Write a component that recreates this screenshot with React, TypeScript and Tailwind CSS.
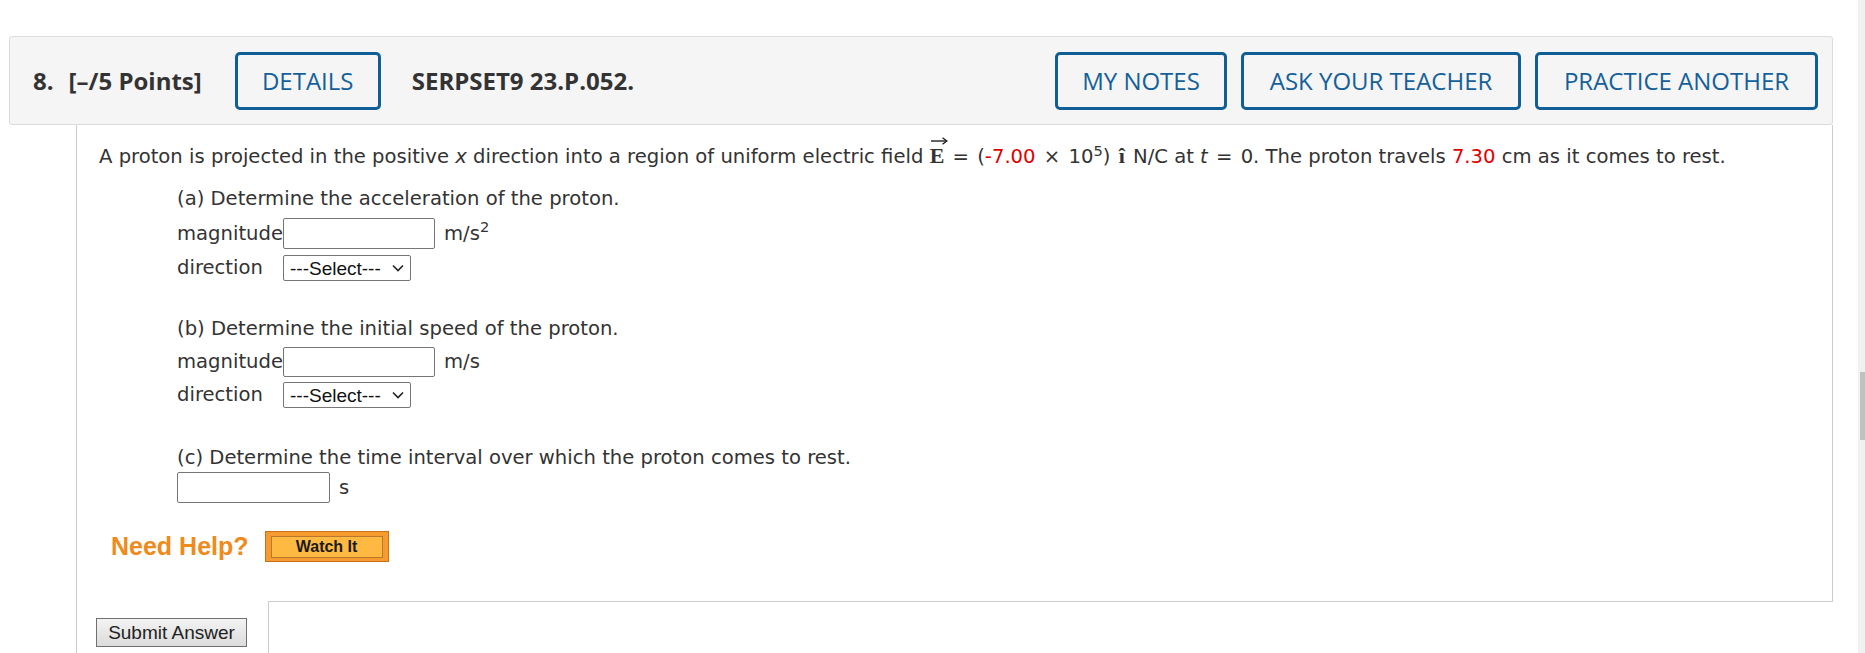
import React from 'react';

const blueBtn =
  "flex h-[58px] items-center justify-center rounded-[5px] border-[3px] border-[#0f5f96] text-[#14609a] font-medium";

const VecE = () => (
  <span className="relative inline-block font-['Liberation_Serif',serif] text-[22px] font-bold leading-none">
    E
    <svg
      className="absolute left-[1px] top-[-8px]"
      width="17"
      height="8"
      viewBox="0 0 17 8"
      fill="none"
      stroke="#222"
      strokeWidth="1.4"
    >
      <path d="M0 4 H15.5" />
      <path d="M11.5 0.8 L15.8 4 L11.5 7.2" />
    </svg>
  </span>
);

const TextBox = ({ w = 'w-[152px]', h = 'h-[31px]' }: { w?: string; h?: string }) => (
  <div className={`${w} ${h} rounded-[2px] border border-[#767676] bg-white`} />
);

const SelectBox = () => (
  <div className="flex h-[26px] w-[128px] items-center justify-between rounded-[2px] border border-[#767676] bg-white pl-[6px] pr-[6px] font-['Liberation_Sans',Arial,sans-serif] text-[19px] leading-none text-[#111]">
    <span>---Select---</span>
    <svg width="12" height="8" viewBox="0 0 12 8" fill="none" stroke="#222" strokeWidth="1.6">
      <path d="M1 1.5 L6 6.5 L11 1.5" />
    </svg>
  </div>
);

const Header = () => (
  <div className="mt-[36px] flex h-[89px] items-center rounded-[3px] border border-[#dcdcdc] bg-[#f5f5f5] pl-[23px] pr-[14px] font-['Open_Sans',sans-serif] text-[24px] text-[#333]">
    <span className="font-bold">8.</span>
    <span className="ml-[15px] font-bold">[–/5 Points]</span>
    <div className={`${blueBtn} ml-[33px] w-[146px]`}>DETAILS</div>
    <span className="ml-[31px] font-bold">SERPSET9 23.P.052.</span>
    <div className="ml-auto flex gap-[14px]">
      <div className={`${blueBtn} w-[172px]`}>MY NOTES</div>
      <div className={`${blueBtn} w-[280px]`}>ASK YOUR TEACHER</div>
      <div className={`${blueBtn} w-[283px]`}>PRACTICE ANOTHER</div>
    </div>
  </div>
);

const Question = () => (
  <div className="ml-[67px] border-l border-[#cccccc] font-['DejaVu_Sans',Verdana,sans-serif] text-[19.6px] leading-[28px] text-[#333]">
    <div className="h-[476px] border-r border-[#cccccc] pl-[22px] pt-[17px]">
      <p>
        A proton is projected in the positive <i>x</i> direction into a region of uniform electric field{' '}
        <VecE /> <span className="mx-[2px]">=</span> (<span className="text-[#e00000]">-7.00</span>{' '}
        <span className="mx-[2px]">×</span> 10<sup>5</sup>){' '}
        <b className="mx-[2px] font-['Liberation_Serif',serif] text-[22px]">î</b> N/C at <i>t</i>{' '}
        <span className="mx-[2px]">=</span> 0. The proton travels{' '}
        <span className="text-[#e00000]">7.30</span> cm as it comes to rest.
      </p>

      <div className="ml-[78px]">
        {/* (a) */}
        <p className="mt-[14px]">(a) Determine the acceleration of the proton.</p>
        <div className="mt-[5px] grid w-max grid-cols-[auto_auto_auto] items-center gap-y-[5px]">
          <span>magnitude</span>
          <TextBox />
          <span className="ml-[9px]">
            m/s<sup>2</sup>
          </span>
          <span>direction</span>
          <SelectBox />
          <span />
        </div>

        {/* (b) */}
        <p className="mt-[33px]">(b) Determine the initial speed of the proton.</p>
        <div className="mt-[4px] grid w-max grid-cols-[auto_auto_auto] items-center gap-y-[4px]">
          <span>magnitude</span>
          <TextBox h="h-[30px]" />
          <span className="ml-[9px]">m/s</span>
          <span>direction</span>
          <SelectBox />
          <span />
        </div>

        {/* (c) */}
        <p className="mt-[35px]">(c) Determine the time interval over which the proton comes to rest.</p>
        <div className="flex items-center">
          <TextBox w="w-[153px]" />
          <span className="ml-[9px]">s</span>
        </div>
      </div>

      <div className="ml-[12px] mt-[28px] flex items-center gap-[16px]">
        <span className="font-['Liberation_Sans',Arial,sans-serif] text-[25px] font-bold leading-none text-[#ef8a1c]">
          Need Help?
        </span>
        <div className="h-[31px] w-[124px] border border-[#c9721b] bg-[#f59b2f] px-[5px] pb-[3px] pt-[4px]">
          <div className="flex h-full items-center justify-center border border-[#b8792c] bg-[#fdb942] font-['Liberation_Sans',Arial,sans-serif] text-[16px] font-bold leading-none text-[#1a1a1a]">
            Watch It
          </div>
        </div>
      </div>
    </div>

    <div className="flex">
      <div className="w-[191px] pl-[19px] pt-[17px]">
        <button className="h-[29px] w-[151px] border border-[#707070] bg-gradient-to-b from-[#f3f3f3] to-[#dcdcdc] font-['Liberation_Sans',Arial,sans-serif] text-[19px] leading-none text-[#222]">
          Submit Answer
        </button>
      </div>
      <div className="h-[52px] flex-1 border-l border-t border-[#cccccc]" />
    </div>
  </div>
);

export default function App() {
  return (
    <div className="flex h-[653px] w-full overflow-hidden bg-white">
      <div className="min-w-0 flex-1 pl-[9px] pr-[25px]">
        <Header />
        <Question />
      </div>
      <div className="w-[7px] bg-[#f1f1f1] pl-[2px] pt-[372px]">
        <div className="h-[68px] w-[5px] bg-[#c1c1c1]" />
      </div>
    </div>
  );
}
